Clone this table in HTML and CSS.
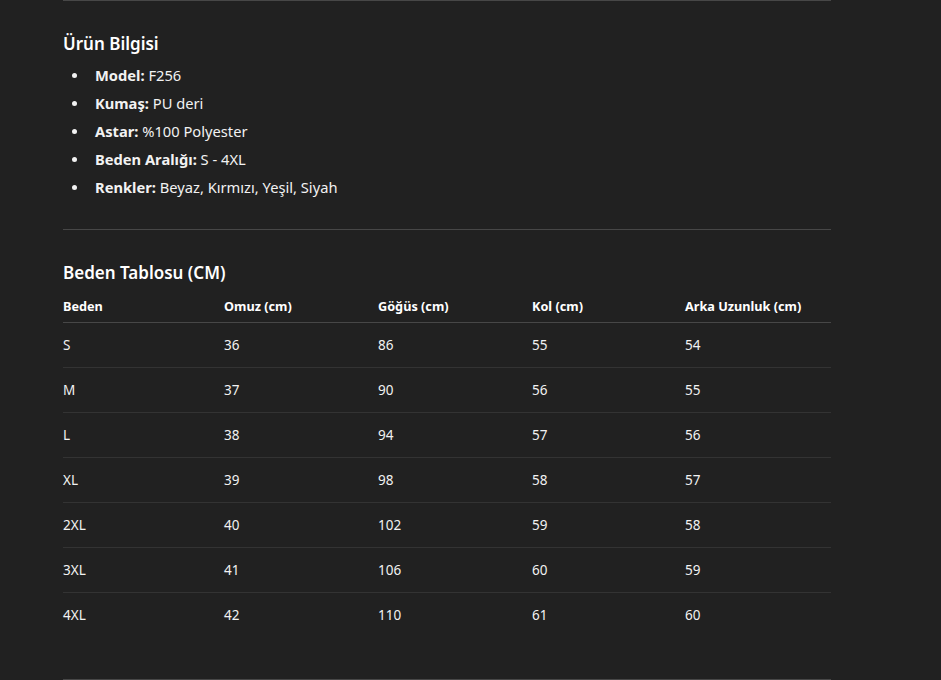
FILE: index.html
```html
<!DOCTYPE html>
<html lang="tr">
<head>
<meta charset="utf-8">
<link rel="stylesheet" href="styles.css">
</head>
<body>
<div class="page">
  <hr class="rule">
  <section class="info">
    <h3 class="title">Ürün Bilgisi</h3>
    <ul class="specs">
      <li><strong>Model:</strong> F256</li>
      <li><strong>Kumaş:</strong> PU deri</li>
      <li><strong>Astar:</strong> %100 Polyester</li>
      <li><strong>Beden Aralığı:</strong> S - 4XL</li>
      <li><strong>Renkler:</strong> Beyaz, Kırmızı, Yeşil, Siyah</li>
    </ul>
  </section>
  <hr class="rule">
  <section class="sizes">
    <h3 class="title">Beden Tablosu (CM)</h3>
    <table class="size-table">
      <colgroup>
        <col class="c1"><col class="c2"><col class="c3"><col class="c4"><col class="c5">
      </colgroup>
      <thead>
        <tr><th>Beden</th><th>Omuz (cm)</th><th>Göğüs (cm)</th><th>Kol (cm)</th><th>Arka Uzunluk (cm)</th></tr>
      </thead>
      <tbody>
        <tr><td>S</td><td>36</td><td>86</td><td>55</td><td>54</td></tr>
        <tr><td>M</td><td>37</td><td>90</td><td>56</td><td>55</td></tr>
        <tr><td>L</td><td>38</td><td>94</td><td>57</td><td>56</td></tr>
        <tr><td>XL</td><td>39</td><td>98</td><td>58</td><td>57</td></tr>
        <tr><td>2XL</td><td>40</td><td>102</td><td>59</td><td>58</td></tr>
        <tr><td>3XL</td><td>41</td><td>106</td><td>60</td><td>59</td></tr>
        <tr><td>4XL</td><td>42</td><td>110</td><td>61</td><td>60</td></tr>
      </tbody>
    </table>
  </section>
  <hr class="rule rule-bottom">
</div>
</body>
</html>
```

FILE: styles.css
```css
html, body {
  margin: 0;
  padding: 0;
  background: #212121;
}
body {
  color: #f2f2f2;
  font-family: "Noto Sans", "Open Sans", "Liberation Sans", sans-serif;
  height: 680px;
  overflow: hidden;
}
.page {
  width: 768px;
  margin-left: 63px;
}
.rule {
  border: 0;
  border-top: 1px solid #474747;
  margin: 0;
  height: 0;
}
.rule-bottom {
  margin-top: 41px;
  border-top: 2px solid #474747;
}
.title {
  margin: 31px 0 0;
  font-size: 17px;
  line-height: 24px;
  font-weight: 600;
  color: #ffffff;
}
.specs {
  margin: 5px 0 28px;
  padding-left: 26px;
  list-style: disc;
}
.specs li {
  font-size: 14.7px;
  line-height: 28px;
  padding-left: 6px;
}
.specs li::marker {
  font-size: 14px;
}
.specs strong {
  font-weight: 700;
}
.size-table {
  margin-top: 4px;
  width: 768px;
  border-collapse: collapse;
  table-layout: fixed;
}
.c1 { width: 161px; }
.c2 { width: 154px; }
.c3 { width: 154px; }
.c4 { width: 153px; }
.c5 { width: 146px; }
.size-table th {
  text-align: left;
  font-size: 12.7px;
  font-weight: 700;
  line-height: 18px;
  padding: 8px 0 7px;
  border-bottom: 1px solid #474747;
  color: #ffffff;
}
.size-table td {
  font-size: 13.5px;
  line-height: 20px;
  padding: 12px 0;
  border-bottom: 1px solid #333333;
}
.size-table tbody tr:last-child td {
  border-bottom: 0;
  padding-bottom: 13px;
}
```
